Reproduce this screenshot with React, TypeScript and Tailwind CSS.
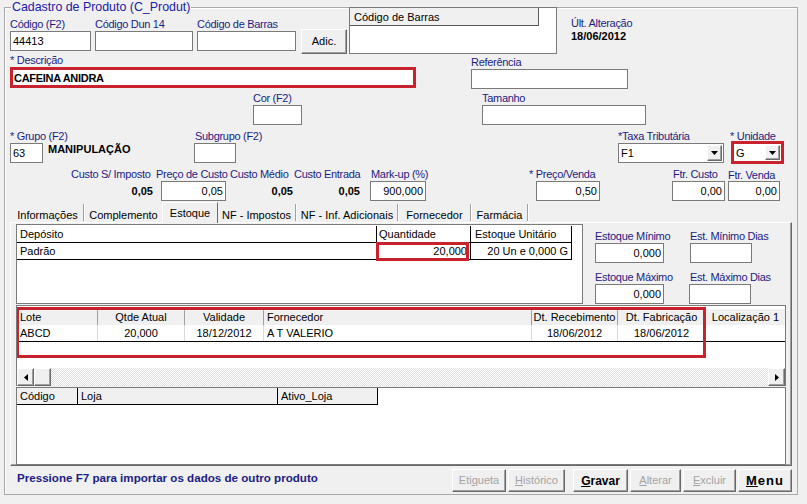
import { Fragment, type ReactNode } from "react"
import clsx from "clsx"

const raised =
  "bg-[#f0f0f0] border border-t-white border-l-white border-r-[#696969] border-b-[#696969] shadow-[inset_-1px_-1px_0_#a0a0a0]"

function Label({ children, className }: { children?: ReactNode; className?: string }) {
  return (
    <div className={clsx("h-[13px] leading-[13px] whitespace-nowrap tracking-[-0.3px] text-[#1c1c84]", className)}>
      {children}
    </div>
  )
}

function Box({ children, className, right }: { children?: ReactNode; className?: string; right?: boolean }) {
  return (
    <div
      className={clsx(
        "h-[20px] bg-white border border-[#7a7a7a] leading-[18px] px-[2px] whitespace-nowrap overflow-hidden",
        right && "text-right",
        className
      )}
    >
      {children}
    </div>
  )
}

function Tri({ dir }: { dir: "down" | "left" | "right" }) {
  if (dir === "down")
    return (
      <svg width="7" height="4" viewBox="0 0 7 4">
        <polygon points="0,0 7,0 3.5,4" fill="#000" />
      </svg>
    )
  return (
    <svg width="4" height="7" viewBox="0 0 4 7">
      <polygon points={dir === "left" ? "4,0 4,7 0,3.5" : "0,0 0,7 4,3.5"} fill="#000" />
    </svg>
  )
}

function Combo({ value, className, red }: { value: string; className?: string; red?: boolean }) {
  return (
    <div
      className={clsx(
        "flex bg-white",
        red ? "h-[23px] border-[3px] border-[#c8232d]" : "h-[20px] border border-[#7a7a7a]",
        className
      )}
    >
      <span className={clsx("flex-1 pl-[2px]", red ? "leading-[17px] pt-[1px]" : "leading-[18px]")}>{value}</span>
      <span className={clsx(raised, "w-[15px] my-[1px] mr-[1px] flex items-center justify-center")}>
        <Tri dir="down" />
      </span>
    </div>
  )
}

function Btn({ children, className, disabled }: { children: ReactNode; className?: string; disabled?: boolean }) {
  return (
    <div
      className={clsx(
        raised,
        "h-[23px] flex items-center justify-center whitespace-nowrap",
        disabled ? "text-[#a3a3a3]" : "text-black",
        className
      )}
    >
      {children}
    </div>
  )
}

const tabs = [
  { name: "Informações", w: "w-[71px]", sep: true },
  { name: "Complemento", w: "w-[77px]", sep: false },
  { name: "Estoque", w: "w-[56px]", active: true },
  { name: "NF - Impostos", w: "w-[77px]", sep: true },
  { name: "NF - Inf. Adicionais", w: "w-[100px]", sep: true },
  { name: "Fornecedor", w: "w-[71px]", sep: true },
  { name: "Farmácia", w: "w-[55px]", sep: true },
]

const loteCols = [
  { h: "Lote", v: "ABCD", w: "w-[81px]", ha: "text-left pl-[3px]", va: "text-left pl-[3px]" },
  { h: "Qtde Atual", v: "20,000", w: "w-[87px]", ha: "text-center", va: "text-center" },
  { h: "Validade", v: "18/12/2012", w: "w-[79px]", ha: "text-center", va: "text-center" },
  { h: "Fornecedor", v: "A T VALERIO", w: "w-[268px]", ha: "text-left pl-[3px]", va: "text-left pl-[3px]" },
  { h: "Dt. Recebimento", v: "18/06/2012", w: "w-[86px]", ha: "text-center", va: "text-center" },
  { h: "Dt. Fabricação", v: "18/06/2012", w: "w-[88px]", ha: "text-center", va: "text-center" },
  { h: "Localização 1", v: "", w: "w-[80px]", ha: "text-center", va: "text-center" },
]

export default function App() {
  return (
    <div className="w-[807px] h-[504px] overflow-hidden bg-[#f0f0f0] pt-[7px] pl-[4px] text-[11px] text-black font-['Liberation_Sans',Arial,sans-serif]">
      <div className="w-[794px] h-[488px] border border-[#a9a9a9] shadow-[inset_1px_1px_0_#fff]">
        <div className="-mt-[7px] ml-[6px] px-[1px] w-fit h-[13px] leading-[13px] bg-[#f0f0f0] text-[12.4px] text-[#2020a4] whitespace-nowrap">
          Cadastro de Produto (C_Produt)
        </div>

        {/* linha 1 */}
        <div className="flex h-[40px]">
          <div className="ml-[5px] mt-[4px]">
            <Label>Código (F2)</Label>
            <Box className="w-[81px]">44413</Box>
          </div>
          <div className="ml-[4px] mt-[4px]">
            <Label>Código Dun 14</Label>
            <Box className="w-[98px]" />
          </div>
          <div className="ml-[4px] mt-[4px]">
            <Label>Código de Barras</Label>
            <Box className="w-[99px]" />
          </div>
          <Btn className="ml-[5px] mt-[15px] w-[46px] h-[25px]">Adic.</Btn>
          <div className="ml-[2px] -mt-[7px] w-[208px] h-[47px] bg-white border border-[#7a7a7a]">
            <div className="h-[18px] w-[189px] bg-[#f0f0f0] border-r border-b border-[#5a5a5a] leading-[16px] pt-[1px] pl-[4px] whitespace-nowrap">
              Código de Barras
            </div>
          </div>
          <div className="ml-[14px] mt-[3px]">
            <Label>Últ. Alteração</Label>
            <div className="font-bold leading-[13px]">18/06/2012</div>
          </div>
        </div>

        {/* descrição */}
        <div className="flex h-[35px]">
          <div className="ml-[5px]">
            <Label>* Descrição</Label>
            <div className="h-[21px] w-[406px] bg-white border-[3px] border-[#c8232d] font-bold tracking-[-0.3px] leading-[15px] pt-[1px] pl-[1px] whitespace-nowrap">
              CAFEINA ANIDRA
            </div>
          </div>
          <div className="ml-[55px] mt-[2px]">
            <Label>Referência</Label>
            <Box className="w-[157px]" />
          </div>
        </div>

        {/* cor / tamanho */}
        <div className="flex h-[36px]">
          <div className="ml-[248px] mt-[3px]">
            <Label>Cor (F2)</Label>
            <Box className="w-[49px]" />
          </div>
          <div className="ml-[180px] mt-[3px]">
            <Label>Tamanho</Label>
            <Box className="w-[164px]" />
          </div>
        </div>

        {/* grupo */}
        <div className="flex h-[39px]">
          <div className="ml-[5px] mt-[5px] w-[33px]">
            <Label>* Grupo (F2)</Label>
            <Box className="w-[33px]">63</Box>
          </div>
          <div className="ml-[5px] mt-[18px] w-[146px] font-bold leading-[13px] whitespace-nowrap">MANIPULAÇÃO</div>
          <div className="mt-[5px] w-[42px]">
            <Label className="pl-[1px]">Subgrupo (F2)</Label>
            <Box className="w-[42px]" />
          </div>
          <div className="ml-[382px] mt-[5px]">
            <Label>*Taxa Tributária</Label>
            <Combo value="F1" className="w-[106px]" />
          </div>
          <div className="ml-[6px] mt-[5px]">
            <Label>* Unidade</Label>
            <Combo value="G" red className="ml-[1px] -mt-[2px] w-[53px]" />
          </div>
        </div>

        {/* custos */}
        <div className="flex h-[38px]">
          <div className="ml-[66px] mt-[4px] w-[85px]">
            <Label>Custo S/ Imposto</Label>
            <div className="h-[20px] leading-[20px] text-right pr-[3px] font-bold">0,05</div>
          </div>
          <div className="mt-[4px] w-[70px]">
            <Label>Preço de Custo</Label>
            <Box right className="ml-[5px] w-[65px]">0,05</Box>
          </div>
          <div className="mt-[4px] w-[68px]">
            <Label className="pl-[4px]">Custo Médio</Label>
            <div className="h-[20px] leading-[20px] text-right pr-[1px] font-bold">0,05</div>
          </div>
          <div className="mt-[4px] w-[68px]">
            <Label>Custo Entrada</Label>
            <div className="h-[20px] leading-[20px] text-right pr-[2px] font-bold">0,05</div>
          </div>
          <div className="ml-[8px] mt-[4px] w-[56px]">
            <Label className="pl-[1px]">Mark-up (%)</Label>
            <Box right className="w-[56px]">900,000</Box>
          </div>
          <div className="ml-[103px] mt-[4px] w-[71px]">
            <Label>* Preço/Venda</Label>
            <Box right className="ml-[7px] w-[64px]">0,50</Box>
          </div>
          <div className="ml-[72px] mt-[4px] w-[53px]">
            <Label className="pl-[1px]">Ftr. Custo</Label>
            <Box right className="w-[53px]">0,00</Box>
          </div>
          <div className="ml-[3px] mt-[4px] w-[52px]">
            <Label className="pt-[1px]">Ftr. Venda</Label>
            <Box right className="w-[52px]">0,00</Box>
          </div>
        </div>

        {/* abas */}
        <div className="flex h-[20px] items-end ml-[7px]">
          {tabs.map((t) =>
            t.active ? (
              <div
                key={t.name}
                className={clsx(
                  t.w,
                  "relative z-10 h-[21px] -mb-[1px] bg-[#f0f0f0] border-t border-l border-white border-r border-r-[#696969] text-center leading-[13px] pt-[4px] whitespace-nowrap"
                )}
              >
                {t.name}
              </div>
            ) : (
              <Fragment key={t.name}>
                <div className={clsx(t.w, "h-[20px] text-center leading-[13px] pt-[7px] whitespace-nowrap")}>
                  {t.name}
                </div>
                {t.sep && <div className="w-[2px] h-[17px] mb-[1px] border-l border-[#a0a0a0] border-r border-r-white" />}
              </Fragment>
            )
          )}
        </div>

        {/* página Estoque */}
        <div className="ml-[5px] w-[782px] h-[244px] border border-t-white border-l-white border-r-[#696969] border-b-[#696969] shadow-[inset_-1px_-1px_0_#a0a0a0]">
          <div className="flex h-[82px]">
            <div className="ml-[5px] mt-[1px] w-[567px] h-[80px] bg-white border border-[#7a7a7a] pt-[1px]">
              <div className="flex h-[17px] leading-[16px]">
                <div className="w-[360px] border-r border-b border-black pl-[3px]">Depósito</div>
                <div className="w-[94px] border-r border-b border-black pl-[2px]">Quantidade</div>
                <div className="w-[101px] border-r border-b border-black pl-[4px] whitespace-nowrap">Estoque Unitário</div>
              </div>
              <div className="flex h-[17px] leading-[16px]">
                <div className="w-[360px] border-r border-b border-black pl-[3px]">Padrão</div>
                <div className="relative w-[94px] border-r border-b border-black pr-[3px] text-right">
                  20,000
                  <span className="absolute -left-[1px] -top-[1px] right-[1px] -bottom-[2px] border-[3px] border-[#c8232d]" />
                </div>
                <div className="w-[101px] border-r border-b border-black pr-[3px] text-right whitespace-nowrap">
                  20 Un e 0,000 G
                </div>
              </div>
            </div>
            <div className="ml-[12px] mt-[7px] w-[95px]">
              <Label>Estoque Mínimo</Label>
              <Box right className="w-[69px]">0,000</Box>
              <Label className="mt-[8px]">Estoque Máximo</Label>
              <Box right className="w-[69px]">0,000</Box>
            </div>
            <div className="mt-[7px]">
              <Label>Est. Mínimo Dias</Label>
              <Box className="w-[62px]" />
              <Label className="mt-[8px]">Est. Máximo Dias</Label>
              <Box className="-ml-[1px] w-[62px]" />
            </div>
          </div>

          {/* lotes */}
          <div className="relative ml-[5px] w-[770px] h-[81px] bg-white border-t border-l border-r border-[#7a7a7a] pt-[3px] overflow-hidden">
            <div className="flex h-[16px] leading-[16px] bg-[#f0f0f0]">
              {loteCols.map((c) => (
                <div key={c.h} className={clsx(c.w, c.ha, "shrink-0 border-r border-[#a0a0a0] whitespace-nowrap")}>
                  {c.h}
                </div>
              ))}
            </div>
            <div className="flex h-[17px] leading-[16px] border-b border-black">
              {loteCols.map((c) => (
                <div key={c.h} className={clsx(c.w, c.va, "shrink-0 border-r border-[#dadada] whitespace-nowrap")}>
                  {c.v}
                </div>
              ))}
            </div>
            <div className="h-[26px]" />
            <div className="flex h-[18px]">
              <div className={clsx(raised, "w-[17px] flex items-center justify-center")}>
                <Tri dir="left" />
              </div>
              <div className={clsx(raised, "w-[17px]")} />
              <div className="flex-1 bg-[repeating-conic-gradient(#ffffff_0%_25%,#dedede_0%_50%)] bg-[length:2px_2px]" />
              <div className={clsx(raised, "w-[17px] flex items-center justify-center")}>
                <Tri dir="right" />
              </div>
            </div>
            <span className="absolute -left-[1px] top-[1px] w-[690px] h-[51px] border-[3px] border-[#c8232d]" />
          </div>

          {/* lojas */}
          <div className="ml-[5px] mt-[1px] w-[770px] h-[78px] bg-white border border-[#7a7a7a]">
            <div className="flex h-[17px] leading-[16px]">
              <div className="w-[61px] bg-[#f0f0f0] border-r border-b border-black pl-[3px]">Código</div>
              <div className="w-[200px] bg-[#f0f0f0] border-r border-b border-black pl-[3px]">Loja</div>
              <div className="w-[100px] bg-[#f0f0f0] border-r border-b border-black pl-[3px]">Ativo_Loja</div>
            </div>
          </div>
        </div>

        {/* rodapé */}
        <div className="flex h-[28px]">
          <div className="ml-[12px] mt-[5px] leading-[13px] text-[11.6px] font-bold text-[#1c1c84] whitespace-nowrap">
            Pressione F7 para importar os dados de outro produto
          </div>
          <div className="ml-auto mr-[5px] mt-[3px] flex gap-[2px]">
            <Btn disabled className="w-[54px]">
              Eti<u>q</u>ueta
            </Btn>
            <Btn disabled className="w-[57px]">
              <u>H</u>istórico
            </Btn>
            <Btn className="ml-[6px] w-[55px] text-[12px] font-bold">
              <u>G</u>ravar
            </Btn>
            <Btn disabled className="w-[51px]">
              <u>A</u>lterar
            </Btn>
            <Btn disabled className="w-[53px]">
              <u>E</u>xcluir
            </Btn>
            <Btn className="w-[54px] text-[13px] font-bold tracking-[1px]">
              <u>M</u>enu
            </Btn>
          </div>
        </div>
      </div>
    </div>
  )
}
